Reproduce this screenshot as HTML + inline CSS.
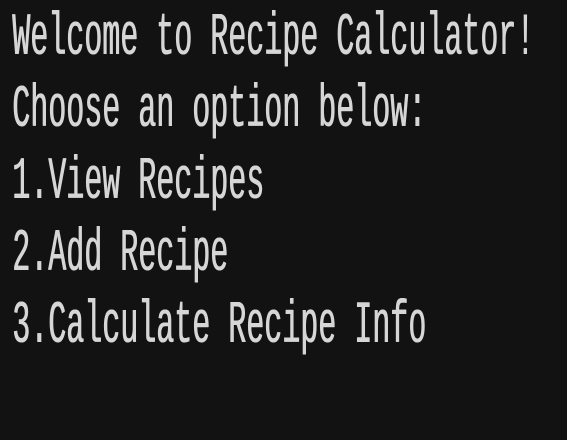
<!DOCTYPE html>
<html><head><style>
html,body{margin:0;padding:0;background:#121212;width:567px;height:440px;overflow:hidden}
.t{position:absolute;left:12px;top:4px;transform-origin:0 0;transform:scaleY(2);font-family:"Liberation Mono",monospace;font-size:30px;line-height:36px;color:#d6d6d6;white-space:pre;letter-spacing:0;text-shadow:0.6px 0 0 #d6d6d6}
</style></head><body>
<div class="t">Welcome to Recipe Calculator!
Choose an option below:
1.View Recipes
2.Add Recipe
3.Calculate Recipe Info</div>
</body></html>
